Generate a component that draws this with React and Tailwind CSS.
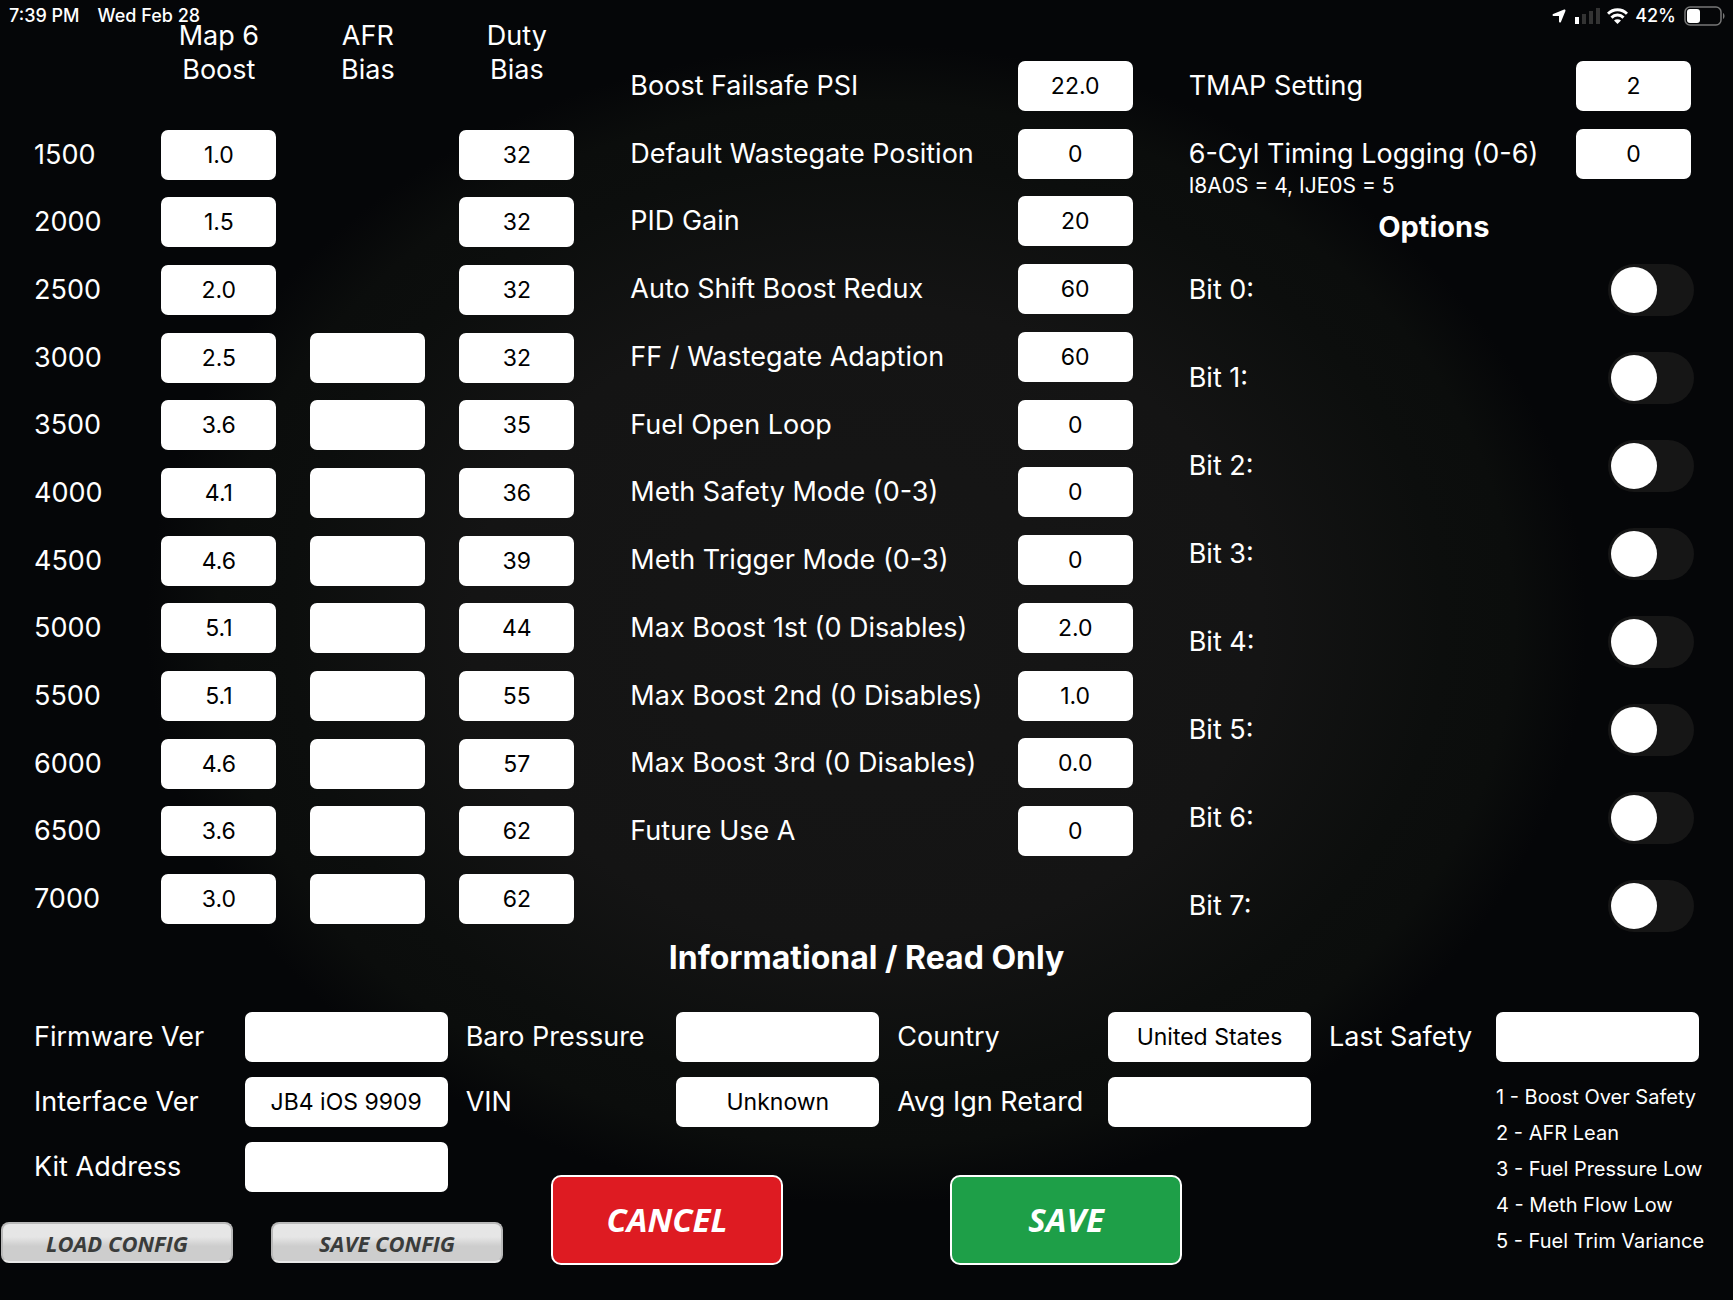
import React from 'react';
import { FaLocationArrow } from 'react-icons/fa6';

const BOOST_ROWS = [
  { rpm: 1500, boost: '1.0', afr: null, duty: '32' },
  { rpm: 2000, boost: '1.5', afr: null, duty: '32' },
  { rpm: 2500, boost: '2.0', afr: null, duty: '32' },
  { rpm: 3000, boost: '2.5', afr: '', duty: '32' },
  { rpm: 3500, boost: '3.6', afr: '', duty: '35' },
  { rpm: 4000, boost: '4.1', afr: '', duty: '36' },
  { rpm: 4500, boost: '4.6', afr: '', duty: '39' },
  { rpm: 5000, boost: '5.1', afr: '', duty: '44' },
  { rpm: 5500, boost: '5.1', afr: '', duty: '55' },
  { rpm: 6000, boost: '4.6', afr: '', duty: '57' },
  { rpm: 6500, boost: '3.6', afr: '', duty: '62' },
  { rpm: 7000, boost: '3.0', afr: '', duty: '62' },
];

const SETTINGS = [
  ['Boost Failsafe PSI', '22.0'],
  ['Default Wastegate Position', '0'],
  ['PID Gain', '20'],
  ['Auto Shift Boost Redux', '60'],
  ['FF / Wastegate Adaption', '60'],
  ['Fuel Open Loop', '0'],
  ['Meth Safety Mode (0-3)', '0'],
  ['Meth Trigger Mode (0-3)', '0'],
  ['Max Boost 1st (0 Disables)', '2.0'],
  ['Max Boost 2nd (0 Disables)', '1.0'],
  ['Max Boost 3rd (0 Disables)', '0.0'],
  ['Future Use A', '0'],
];

const INFO_COLUMNS = [
  [
    ['Firmware Ver', ''],
    ['Interface Ver', 'JB4 iOS 9909'],
    ['Kit Address', ''],
  ],
  [
    ['Baro Pressure', ''],
    ['VIN', 'Unknown'],
  ],
  [
    ['Country', 'United States'],
    ['Avg Ign Retard', ''],
  ],
];

const SAFETY_CODES = [
  '1 - Boost Over Safety',
  '2 - AFR Lean',
  '3 - Fuel Pressure Low',
  '4 - Meth Flow Low',
  '5 - Fuel Trim Variance',
];

const BITS = [0, 1, 2, 3, 4, 5, 6, 7];

const toId = (label) => label.toLowerCase().replace(/[^a-z0-9]+/g, '-');

const NumberBox = (props) => (
  <input
    type="text"
    className="block h-[50px] w-[115px] shrink-0 rounded-[7px] bg-white text-center text-[23px] text-black"
    {...props}
  />
);

const SettingRow = ({ label, value }) => (
  <div className="flex items-center justify-between">
    <label htmlFor={toId(label)} className="whitespace-nowrap">
      {label}
    </label>
    <NumberBox id={toId(label)} defaultValue={value} />
  </div>
);

const InfoRow = ({ label, value }) => (
  <div className="flex items-center justify-between">
    <label htmlFor={toId(label)} className="whitespace-nowrap">
      {label}
    </label>
    <input
      id={toId(label)}
      type="text"
      readOnly
      value={value}
      className="h-[50px] w-[203px] shrink-0 rounded-[7px] bg-white text-center text-[23px] text-black"
    />
  </div>
);

const StatusBar = () => (
  <header className="absolute inset-x-0 top-0 flex h-8 items-center justify-between pl-[9px] pr-2 text-lg font-medium leading-5">
    <div className="flex gap-[18px]">
      <span>7:39 PM</span>
      <span>Wed Feb 28</span>
    </div>
    <div className="flex items-center">
      <FaLocationArrow className="mr-2 size-4" />
      <svg className="mr-[7px] h-4 w-[25px]" viewBox="0 0 25 16">
        <rect x="0" y="9" width="4" height="7" fill="#fff" />
        <rect x="7" y="6" width="4" height="10" fill="#333" />
        <rect x="14" y="3" width="4" height="13" fill="#333" />
        <rect x="21" y="0" width="4" height="16" fill="#333" />
      </svg>
      <svg className="mr-[7px] h-4 w-[21px]" viewBox="0 0 21 16">
        <g fill="none" stroke="#fff" strokeWidth="3">
          <path d="M1 5.8a13.4 13.4 0 0 1 19 0" />
          <path d="M4.5 9.6a8.5 8.5 0 0 1 12 0" />
        </g>
        <path d="M10.5 16 7 12.6a5 5 0 0 1 7 0z" fill="#fff" />
      </svg>
      <span className="mr-2">42%</span>
      <svg className="h-5 w-[41px]" viewBox="0 0 41 20">
        <rect x="1" y="1" width="36" height="18" rx="5" fill="none" stroke="#777" strokeWidth="1.5" />
        <rect x="3" y="3" width="13" height="14" rx="3" fill="#fff" />
        <path d="M39 7c2 1 2 5 0 6z" fill="#777" />
      </svg>
    </div>
  </header>
);

const BoostTable = () => (
  <table className="-mt-[33px] h-[914px] w-full self-start">
    <thead>
      <tr className="h-[102px] align-top">
        <th className="font-normal">
          <span className="sr-only">RPM</span>
        </th>
        <th className="w-[115px] font-normal">
          Map 6<br />
          Boost
        </th>
        <th className="w-[183px] font-normal">
          AFR
          <br />
          Bias
        </th>
        <th className="w-[115px] font-normal">
          Duty
          <br />
          Bias
        </th>
      </tr>
    </thead>
    <tbody>
      {BOOST_ROWS.map((row) => (
        <tr key={row.rpm}>
          <th scope="row" className="text-left font-normal">
            {row.rpm}
          </th>
          <td>
            <NumberBox aria-label={`Map 6 boost ${row.rpm}`} defaultValue={row.boost} />
          </td>
          <td className="px-[34px]">
            {row.afr !== null && (
              <NumberBox aria-label={`AFR bias ${row.rpm}`} defaultValue={row.afr} />
            )}
          </td>
          <td>
            <NumberBox aria-label={`Duty bias ${row.rpm}`} defaultValue={row.duty} />
          </td>
        </tr>
      ))}
    </tbody>
  </table>
);

const OptionsPanel = () => (
  <div>
    <div className="grid min-h-[136px]">
      <SettingRow label="TMAP Setting" value="2" />
      <SettingRow label="6-Cyl Timing Logging (0-6)" value="0" />
    </div>
    <p className="-mt-4 text-[21px] leading-7">I8A0S = 4, IJE0S = 5</p>
    <h2 className="mb-px mt-[9px] pr-3 text-center text-[29px] font-bold leading-9">Options</h2>
    {BITS.map((bit) => (
      <label key={bit} className="-mr-[3px] flex h-[88px] items-center justify-between">
        Bit {bit}:
        <span className="relative h-[52px] w-[86px] rounded-full bg-[#161616] p-[3px] has-checked:bg-[#34c759]">
          <input type="checkbox" role="switch" className="peer absolute inset-0 size-full cursor-pointer opacity-0" />
          <span className="pointer-events-none block size-[46px] rounded-full bg-white peer-checked:ml-auto" />
        </span>
      </label>
    ))}
  </div>
);

const ConfigButton = ({ children }) => (
  <button
    type="button"
    className="h-[41px] w-[232px] rounded-lg border-2 border-[#b9b9b9] border-b-[#e8e8e8] bg-linear-to-b from-[#e6e6e6] from-35% to-[#cdcdcd] to-60% font-['Open_Sans',sans-serif] text-[22px] font-bold italic leading-none text-[#3a3c3b]"
  >
    {children}
  </button>
);

const App = () => {
  return (
    <div className="relative min-h-screen overflow-hidden bg-[#050608] bg-[radial-gradient(ellipse_720px_580px_at_50%_48%,#161616_0%,#141414_55%,#0c0e0d_80%,#0b0d0c_90%,#050608_100%)] font-['Inter',sans-serif] text-[27px] leading-[34px] text-white">
      <StatusBar />

      <main className="pt-[52px]">
        <section className="grid grid-cols-[540fr_502fr_502fr] gap-14 pl-[34px] pr-[42px]">
          <BoostTable />
          <div className="grid min-h-[813px] self-start">
            {SETTINGS.map(([label, value]) => (
              <SettingRow key={label} label={label} value={value} />
            ))}
          </div>
          <OptionsPanel />
        </section>

        <h2 className="-mt-2 text-center text-[32px] font-bold leading-8">
          Informational / Read Only
        </h2>

        <section className="mt-[38px] flex gap-[18px] pr-[34px]">
          <div className="grow">
            <div className="grid grid-cols-3 gap-[18px] pl-[34px]">
              {INFO_COLUMNS.map((column) => (
                <div key={column[0][0]} className="flex flex-col gap-[15px]">
                  {column.map(([label, value]) => (
                    <InfoRow key={label} label={label} value={value} />
                  ))}
                </div>
              ))}
            </div>
            <div className="-mt-[17px] flex items-end">
              <div className="flex gap-[38px] pb-[2px] pl-px">
                <ConfigButton>LOAD CONFIG</ConfigButton>
                <ConfigButton>SAVE CONFIG</ConfigButton>
              </div>
              <button
                type="button"
                className="ml-12 h-[90px] w-[232px] rounded-[10px] border-2 border-white bg-[#de1b22] font-['Open_Sans',sans-serif] text-[33px] font-bold italic"
              >
                CANCEL
              </button>
              <button
                type="button"
                className="ml-[167px] h-[90px] w-[232px] rounded-[10px] border-2 border-white bg-[#1e9f48] font-['Open_Sans',sans-serif] text-[33px] font-bold italic"
              >
                SAVE
              </button>
            </div>
          </div>
          <div className="w-[370px] shrink-0">
            <InfoRow label="Last Safety" value="" />
            <ul className="ml-[167px] mt-[17px] whitespace-nowrap text-xl leading-9">
              {SAFETY_CODES.map((code) => (
                <li key={code}>{code}</li>
              ))}
            </ul>
          </div>
        </section>
      </main>
    </div>
  );
};

export default App;
